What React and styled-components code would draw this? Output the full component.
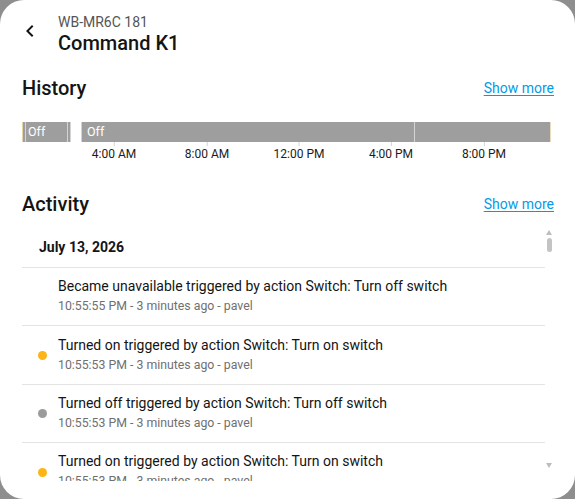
import React from "react";
import styled, { createGlobalStyle } from "styled-components";

const GlobalStyle = createGlobalStyle`
  html, body {
    margin: 0;
    padding: 0;
    background: #8e8e8e;
  }
  body {
    font-family: Roboto, "Noto Sans", Arial, sans-serif;
    color: #141414;
  }
`;

const segments = [
  { left: 0, width: 49, label: "Off", marks: [2, 44, 47] },
  { left: 59, width: 470, label: "Off", marks: [332] },
];

const ticks = [
  { x: 92, label: "4:00 AM" },
  { x: 185, label: "8:00 AM" },
  { x: 277, label: "12:00 PM" },
  { x: 369, label: "4:00 PM" },
  { x: 462, label: "8:00 PM" },
];

const events = [
  {
    text: "Became unavailable triggered by action Switch: Turn off switch",
    meta: "10:55:55 PM - 3 minutes ago - pavel",
    dot: null,
  },
  {
    text: "Turned on triggered by action Switch: Turn on switch",
    meta: "10:55:53 PM - 3 minutes ago - pavel",
    dot: "#fdb515",
  },
  {
    text: "Turned off triggered by action Switch: Turn off switch",
    meta: "10:55:53 PM - 3 minutes ago - pavel",
    dot: "#9b9b9b",
  },
  {
    text: "Turned on triggered by action Switch: Turn on switch",
    meta: "10:55:53 PM - 3 minutes ago - pavel",
    dot: "#fdb515",
  },
];

const App = () => {
  return (
    <>
      <GlobalStyle />
      <Dialog>
        <Header>
          <BackButton aria-label="back">
            <svg width="24" height="24" viewBox="0 0 24 24">
              <path
                d="M15.4 7.4 14 6l-6 6 6 6 1.4-1.4L10.8 12z"
                fill="#141414"
              />
            </svg>
          </BackButton>
          <Titles>
            <Subtitle>WB-MR6C 181</Subtitle>
            <Title>Command K1</Title>
          </Titles>
        </Header>

        <SectionHead>
          <SectionTitle>History</SectionTitle>
          <MoreLink href="#">Show more</MoreLink>
        </SectionHead>

        <Timeline>
          <Bar>
            {segments.map((s, i) => (
              <Segment key={i} style={{ left: s.left, width: s.width }}>
                <SegmentLabel>{s.label}</SegmentLabel>
                {s.marks.map((m) => (
                  <Mark key={m} style={{ left: m }} />
                ))}
              </Segment>
            ))}
          </Bar>
          <Axis>
            {ticks.map((t) => (
              <Tick key={t.label} style={{ left: t.x }}>
                <TickLine />
                <TickLabel>{t.label}</TickLabel>
              </Tick>
            ))}
          </Axis>
        </Timeline>

        <SectionHead $activity>
          <SectionTitle>Activity</SectionTitle>
          <MoreLink href="#">Show more</MoreLink>
        </SectionHead>

        <ListWrap>
          <List>
            <DateRow>July 13, 2026</DateRow>
            {events.map((e, i) => (
              <EventRow key={i}>
                <DotCell>{e.dot && <Dot $color={e.dot} />}</DotCell>
                <EventBody>
                  <EventText>{e.text}</EventText>
                  <EventMeta>{e.meta}</EventMeta>
                </EventBody>
              </EventRow>
            ))}
          </List>
          <Scrollbar>
            <Arrow $up />
            <Thumb />
            <Spacer />
            <Arrow />
          </Scrollbar>
        </ListWrap>
      </Dialog>
    </>
  );
};

const Dialog = styled.div`
  box-sizing: border-box;
  width: 575px;
  height: 499px;
  background: #fff;
  border-radius: 24px;
  padding: 12px 22px 0 22px;
  overflow: hidden;
  display: flex;
  flex-direction: column;
`;

const Header = styled.div`
  display: flex;
  align-items: center;
  gap: 16px;
  margin-left: -4px;
`;

const BackButton = styled.button`
  border: 0;
  background: none;
  padding: 0;
  width: 24px;
  height: 24px;
  display: flex;
  align-items: center;
  justify-content: center;
  margin-top: -4px;
`;

const Titles = styled.div`
  display: flex;
  flex-direction: column;
`;

const Subtitle = styled.div`
  font-size: 14px;
  line-height: 20px;
  color: #555;
`;

const Title = styled.div`
  font-size: 20px;
  line-height: 22px;
  font-weight: 500;
`;

const SectionHead = styled.div`
  display: flex;
  align-items: center;
  justify-content: space-between;
  margin-top: ${(p) => (p.$activity ? "26px" : "22px")};
`;

const SectionTitle = styled.h2`
  margin: 0;
  font-size: 20px;
  line-height: 24px;
  font-weight: 500;
`;

const MoreLink = styled.a`
  color: #039be5;
  font-size: 14px;
  text-decoration: underline;
  text-underline-offset: 2px;
  margin-right: -1px;
`;

const Timeline = styled.div`
  margin-top: 22px;
  display: flex;
  flex-direction: column;
`;

const Bar = styled.div`
  position: relative;
  height: 20px;
`;

const Segment = styled.div`
  position: absolute;
  top: 0;
  height: 20px;
  background: #9e9e9e;
  border-left: 1px solid #e3d3a8;
  border-right: 1px solid #e8dcc0;
  box-sizing: border-box;
`;

const SegmentLabel = styled.span`
  position: absolute;
  left: 5px;
  top: 2px;
  color: #fff;
  font-size: 12.5px;
  line-height: 16px;
`;

const Mark = styled.div`
  position: absolute;
  top: 0;
  width: 1px;
  height: 20px;
  background: #d4d4d4;
`;

const Axis = styled.div`
  position: relative;
  height: 24px;
`;

const Tick = styled.div`
  position: absolute;
  top: 0;
  display: flex;
  flex-direction: column;
  align-items: center;
  transform: translateX(-50%);
`;

const TickLine = styled.div`
  width: 1px;
  height: 4px;
  background: #d6d6d6;
`;

const TickLabel = styled.div`
  font-size: 12px;
  line-height: 16px;
  color: #1c1c1c;
  white-space: nowrap;
`;

const ListWrap = styled.div`
  position: relative;
  margin-top: 13px;
  height: 252px;
  margin-right: -22px;
  padding-right: 30px;
  overflow: hidden;
`;

const List = styled.div`
  display: flex;
  flex-direction: column;
`;

const DateRow = styled.div`
  font-size: 14px;
  font-weight: 700;
  line-height: 20px;
  padding: 8px 0 10px 17px;
  border-bottom: 1px solid #e4e4e4;
`;

const EventRow = styled.div`
  display: flex;
  align-items: center;
  height: 57.4px;
  border-bottom: 1px solid #e4e4e4;
`;

const DotCell = styled.div`
  width: 36px;
  display: flex;
  justify-content: center;
  padding-top: 1px;
`;

const Dot = styled.span`
  width: 9px;
  height: 9px;
  border-radius: 50%;
  background: ${(p) => p.$color};
  margin-left: 4px;
`;

const EventBody = styled.div`
  display: flex;
  flex-direction: column;
  gap: 1px;
  margin-top: -2px;
`;

const EventText = styled.div`
  font-size: 14px;
  line-height: 20px;
  color: #141414;
`;

const EventMeta = styled.div`
  font-size: 12.3px;
  line-height: 18px;
  color: #6f6f6f;
`;

const Scrollbar = styled.div`
  position: absolute;
  top: 0;
  right: 22px;
  bottom: 10px;
  width: 8px;
  display: flex;
  flex-direction: column;
  align-items: center;
`;

const Arrow = styled.div`
  width: 0;
  height: 0;
  border-left: 3.5px solid transparent;
  border-right: 3.5px solid transparent;
  ${(p) =>
    p.$up
      ? "border-bottom: 5px solid #bdbdbd;"
      : "border-top: 5px solid #bdbdbd;"}
  margin: 1px 0 3px;
`;

const Thumb = styled.div`
  width: 5px;
  height: 14px;
  border-radius: 3px;
  background: #c4c4c4;
`;

const Spacer = styled.div`
  flex: 1;
`;

export default App;
